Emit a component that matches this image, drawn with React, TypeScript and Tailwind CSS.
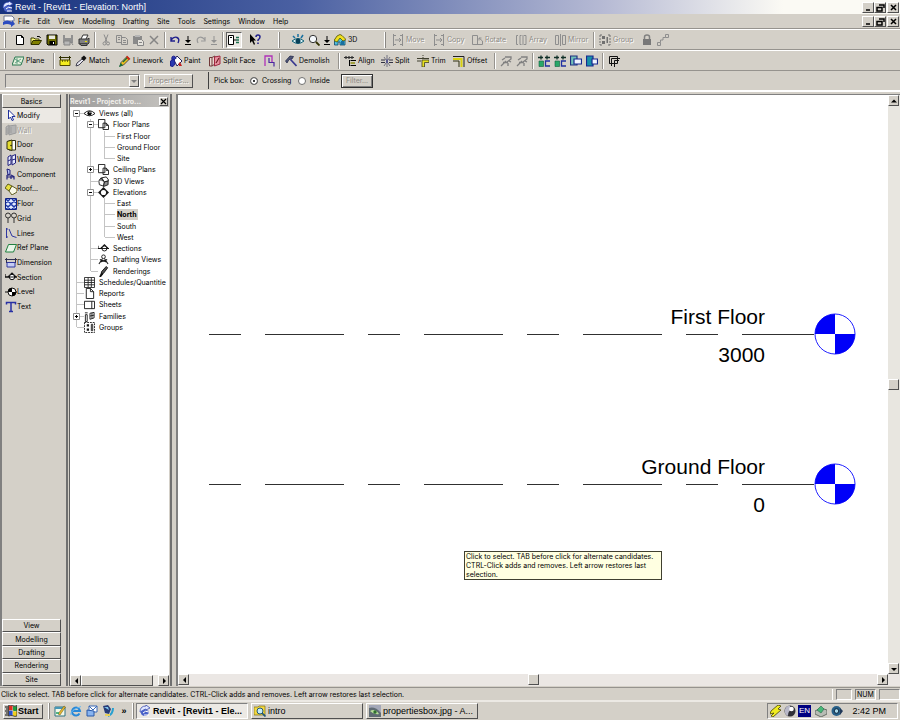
import { ReactNode } from "react";

const raised = "border border-t-white border-l-white border-r-[#505050] border-b-[#505050] bg-[#d4d0c8]";
const sunken = "border border-t-[#808080] border-l-[#808080] border-r-white border-b-white";

// 12x12 glyphs shared by the toolbars, the design bar and the browser
const glyphs: Record<string, ReactNode> = {
  revit: (
    <>
      <path d="M1 7 Q1 1 7 1 L7 0 L11 3 L7 5 L7 4 Q4 4 4 7Z" fill="#dfe6ff" stroke="#2438a8" strokeWidth=".7" />
      <path d="M2 6 Q5 3 10 6 Q10 11 5 11 Q1 10 2 6Z" fill="#4a62c8" />
      <path d="M4 8 Q6 5 10 7 M5 10 H10" stroke="#fff" fill="none" />
    </>
  ),
  doc: (
    <>
      <path d="M1 1H9L11 3V6H1Z" fill="#fff" stroke="#707890" />
      <path d="M0 7 Q4 4 9 7 V5 L12 9 L8 12 V10 Q4 8 0 10Z" fill="#2c4cc0" />
    </>
  ),
  new: <path d="M2.500 1.500H7.500L9.500 3.500V10.500H2.500ZM7.500 1.500V3.500H9.500" fill="#fff" stroke="#000" />,
  open: (
    <>
      <path d="M1 10V4H4L5 5H9V7" fill="#ffff80" stroke="#404000" />
      <path d="M1 10.500 3 6.500H11.500L9 10.500Z" fill="#808000" stroke="#303000" />
      <path d="M7 2.500H9.500L10.500 4" stroke="#000" fill="none" />
    </>
  ),
  save: (
    <>
      <path d="M1 1H11V11H2L1 10Z" fill="#6b6b00" stroke="#000" />
      <path d="M3 1.500H9V5H3Z" fill="#e8e8e0" />
      <path d="M3.500 7H9V11H3.500Z" fill="#000" />
      <path d="M7 8H8V10H7Z" fill="#fff" />
    </>
  ),
  saveAll: (
    <>
      <path d="M1 1H11V9H1Z" fill="#909090" />
      <path d="M3 1H9V4H3Z" fill="#d4d0c8" />
      <path d="M2 7H8V11H2ZM9 8 11 11" fill="#b8b8b8" stroke="#858585" />
    </>
  ),
  print: (
    <>
      <path d="M3 5 5 1H10L8 5" fill="#fff" stroke="#333" />
      <path d="M1 5H10L11 4V9L10 10H1Z" fill="#808080" stroke="#333" />
      <path d="M2 10H9V11.500H3Z" fill="#ccc" stroke="#333" />
      <path d="M7 7.500H9" stroke="#e8e000" />
    </>
  ),
  cut: <path d="M4 0.500 7 8M8 0.500 5 8M4.500 8A1.500 1.500 0 1 0 4.500 11 1.500 1.500 0 1 0 4.500 8M8 8A1.500 1.500 0 1 0 8 11 1.500 1.500 0 1 0 8 8" fill="none" stroke="#8a8a8a" />,
  copy: <path d="M.5 1.500H5.500V8.500H.5ZM5.500 3.500H9.500L11.500 5.500V10.500H5.500ZM2 3.500H4M2 5.500H4M7 6.500H10M7 8.500H10" fill="#d4d0c8" stroke="#8a8a8a" />,
  paste: (
    <>
      <path d="M1 2H10V10H1Z" fill="#8a8a8a" />
      <path d="M3 1H8V3H3Z" fill="#b5b5b5" />
      <path d="M5.500 5.500H9.500L11.500 7.500V11.500H5.500ZM7 8.500H10" fill="#e4e2dc" stroke="#858585" />
    </>
  ),
  del: <path d="M2 2 10 10M10 2 2 10" stroke="#858585" strokeWidth="1.500" />,
  undo: <path d="M2 3V7H6M2 6Q5 2 8 3.500 11 5 9 9" fill="none" stroke="#20208c" strokeWidth="1.400" />,
  redo: <path d="M10 3V7H6M10 6Q7 2 4 3.500 1 5 3 9" fill="none" stroke="#999" strokeWidth="1.200" />,
  down: <path d="M5.500 2H6.500V6H9L6 9 3 6H5.500ZM3 10H9V11H3Z" fill="#000" />,
  downOff: <path d="M5.500 2H6.500V6H9L6 9 3 6H5.500ZM3 10H9V11H3Z" fill="#929292" />,
  browser: (
    <>
      <path d="M.5 1.500H5.500V10.500H.5Z" fill="#fff" stroke="#000" />
      <path d="M5.500 6H8M2 3.500H4" stroke="#000" />
      <path d="M8 3.500H11M8 6H11M8 8.500H11" stroke="#207050" strokeWidth="1.500" />
    </>
  ),
  help: (
    <>
      <path d="M1 0V9L3 7 5 11 6 10 4.500 6.500H7Z" fill="#000" />
      <path d="M7 3Q7 1 9 1T11 3Q11 4.500 9 6V7M9 8.500V10" fill="none" stroke="#20208c" strokeWidth="1.500" />
    </>
  ),
  viewEye: (
    <>
      <path d="M0 7Q6 2 12 7 6 12 0 7Z" fill="#d8f4f8" stroke="#106078" />
      <circle cx="6" cy="7" r="2.500" fill="#084058" />
      <path d="M1 2 3 4M6 0V3M11 1 9 4" stroke="#1870a0" strokeWidth="1.500" />
    </>
  ),
  zoom: (
    <>
      <circle cx="5" cy="5" r="3.700" fill="#f4f8fc" stroke="#303030" />
      <path d="M8 8 11.500 11.500" stroke="#303000" strokeWidth="1.800" />
    </>
  ),
  house: (
    <>
      <path d="M0.500 6V11H4V8H6V11H11V6L6 1Z" fill="#50c0e0" stroke="#104868" strokeWidth=".8" />
      <path d="M0 6.500 3 2 6 0.500 8 1.500 12 5.500 9 7 6 4 3 8Z" fill="#f0e020" stroke="#505000" strokeWidth=".8" />
      <path d="M7 7H10V11H7Z" fill="#1870a0" />
    </>
  ),
  move: <path d="M1.500 0V12M1.500 1.500H4M1.500 10.500H4M10.500 0V12M10.500 1.500H8M10.500 10.500H8M3 6H9M7 4 9 6 7 8" fill="none" stroke="#8e8e8e" />,
  rotate: <path d="M1.500 1.500H6.500V10.500H1.500ZM4 10.500H11.500V7L8 4M8 4V6.500M8 4H10.500" fill="none" stroke="#8e8e8e" />,
  array: <path d="M3 1.500H1.500V10.500H3M6.500 1.500H5V10.500H6.500M9 1.500H11V10.500H9M8 1V11" fill="none" stroke="#8e8e8e" />,
  mirror: <path d="M1.500 1.500H4.500V10.500H1.500ZM8.500 1.500H11.500V10.500H8.500ZM6.500 0V12" fill="none" stroke="#8e8e8e" />,
  groupOff: (
    <>
      <path d="M1 1H3M9 1H11M1 11H3M9 11H11M1 1V11M11 1V11" stroke="#707070" strokeDasharray="2 1" />
      <path d="M3 2H6V5H3ZM3 7H6V10H3ZM7.500 3H9V9H7.500Z" fill="#707070" />
    </>
  ),
  lock: (
    <>
      <path d="M3.500 5V3Q3.500 1 6 1T8.500 3V5" fill="none" stroke="#808080" strokeWidth="1.500" />
      <path d="M2 5H10V11H2Z" fill="#787878" />
    </>
  ),
  link: <path d="M.5 8.500H3.500V11.500H.5ZM8.500 .5H11.500V3.500H8.500ZM3.500 8.500V6H6V3.500H8.500" fill="none" stroke="#8e8e8e" />,
  plane: (
    <>
      <path d="M3 2H12L9 10H0Z" fill="#e4f0dc" stroke="#287850" />
      <path d="M3 4 9 8M9 4 3 8M5 3V9" stroke="#489070" strokeWidth=".8" />
    </>
  ),
  measure: (
    <>
      <path d="M0 2.500H12M1.500 1V5M10.500 1V5" stroke="#303000" />
      <path d="M1 5H11V10.500H1Z" fill="#f4ec20" stroke="#504800" />
      <path d="M3.500 5V7M6 5V7M8.500 5V7" stroke="#404000" strokeWidth=".7" />
    </>
  ),
  match: (
    <>
      <path d="M1 11 2 8 7 4 8.500 5.500 4 10Z" fill="#e8e8f0" stroke="#404050" />
      <path d="M6 3 9 0.500 11.500 3 9 6Z" fill="#101010" />
    </>
  ),
  linework: (
    <>
      <path d="M1 11 2 7.500 8 1.500 10.500 4 4.500 10Z" fill="#f0c020" stroke="#303030" strokeWidth=".8" />
      <path d="M8 0.500 11.500 4 9.500 5 7 2.500Z" fill="#d02818" />
      <path d="M4 7 8 3M1 11 2 9 3 10Z" stroke="#18703c" strokeWidth="1.200" />
    </>
  ),
  paint: (
    <>
      <path d="M4 5 7 1 12 6 7 11Z" fill="#fff" stroke="#202060" />
      <path d="M2 5Q1 0 5 1.500L6 4M0.500 6 4 4 5 9 3 11.500 0.500 11Z" fill="#2838b0" stroke="#20208c" />
      <path d="M8.500 8.500 10 7 12 11H9Z" fill="#c02020" />
    </>
  ),
  splitFace: (
    <>
      <path d="M.5 2.500H3V11H.5ZM3 11 6 9V1L3 2.500" fill="#e8d8d0" stroke="#703838" />
      <path d="M5.500 2 11 1V9L5.500 11Z" fill="#e890a0" stroke="#a02840" />
      <path d="M7 8 10 3" stroke="#702020" strokeWidth="1.200" />
    </>
  ),
  portal: (
    <>
      <path d="M2 11V1H9V8" fill="none" stroke="#b030b8" strokeWidth="1.300" />
      <path d="M6 3V7.500H11V11.500" fill="none" stroke="#4828a0" strokeWidth="1.200" />
    </>
  ),
  hammer: (
    <>
      <path d="M0.500 6 5 1 8.500 1.500 7 4 4 4.500 2 8Z" fill="#505878" stroke="#181c40" strokeWidth=".7" />
      <path d="M5.500 4.500 11.500 11" stroke="#383890" strokeWidth="1.700" />
    </>
  ),
  align: (
    <>
      <path d="M0 2.500H10M2 1V4M5 1V4M8 1V4" stroke="#303030" strokeWidth="1.200" />
      <path d="M6.500 5.500H12M6.500 10.500H12M5.500 5V11" stroke="#000" />
      <path d="M6.500 8H11" stroke="#909010" strokeWidth="1.500" />
    </>
  ),
  split: (
    <>
      <path d="M0 5H4M8 5H12M0 7.500H4M8 7.500H12" stroke="#303040" />
      <path d="M3 2 5 5M9 2 7 5M3 11 5 8M9 11 7 8M6 0V12" fill="none" stroke="#686878" strokeWidth=".9" />
      <path d="M5 4.500H7V8H5Z" fill="#585890" />
    </>
  ),
  trim: (
    <>
      <path d="M0 3.500H12M0 6H4" stroke="#404030" />
      <path d="M5 12V5H12V7.500H7.500V12Z" fill="#e8e020" stroke="#404020" strokeWidth=".8" />
      <path d="M6 0V4" stroke="#404030" strokeDasharray="1 1" />
    </>
  ),
  offset: (
    <>
      <path d="M0 1.500H11V12" fill="none" stroke="#202020" />
      <path d="M0 4H8.500V12" fill="none" stroke="#d8d010" strokeWidth="2" />
      <path d="M0 6H6V12" fill="none" stroke="#303010" />
    </>
  ),
  wrench: <path d="M1 11 6 6M5 2H11V4L7 7M2 5 5 3M3 7.500H8M8 8V11M9 6 11 7" fill="none" stroke="#808080" strokeWidth="1.300" />,
  joinA: (
    <>
      <path d="M0 2.500H5M7 2.500H12M3 .5V4.500M9 .5V4.500" stroke="#103028" strokeWidth="1.300" />
      <path d="M1 6H5.500V11.500H1Z" fill="#28a868" stroke="#106040" strokeWidth=".6" />
      <path d="M12 6H7.500V11H12" fill="none" stroke="#2030a0" strokeWidth="1.300" />
    </>
  ),
  joinB: (
    <>
      <path d="M.5 1H7V10H.5Z" fill="#70c0b8" stroke="#203080" strokeWidth="1.200" />
      <path d="M4 4H11.500V9H4Z" fill="#f0f4ff" stroke="#182890" strokeWidth="1.200" />
    </>
  ),
  joinC: (
    <>
      <path d="M.5 1H7V11H.5Z" fill="#1890a8" stroke="#182890" strokeWidth="1.200" />
      <path d="M6 4H11.500V9H6Z" fill="#f0f4ff" stroke="#182890" strokeWidth="1.200" />
    </>
  ),
  frames: <path d="M3.500 8.500H1.500V1.500H9.500V3M3.500 11V3.500H12M6.500 12V5.500H11M1.500 8.500H9.500V3.500" fill="none" stroke="#101010" />,
  modify: <path d="M3.500 1V10L5.500 8 7 11.500 8.500 11 7 7.500H10Z" fill="#fff" stroke="#20309c" />,
  wall: <path d="M1 3 4 1V9L1 11ZM4 2 11 1V9L4 11ZM2 4V9M6 3V9" fill="#b4b4b4" stroke="#9c9c9c" />,
  door: (
    <>
      <path d="M4 1.500H10.500V11H4Z" fill="#fff" stroke="#303010" />
      <path d="M2 2.500 7 1V11.500L2 10Z" fill="#e4dc30" stroke="#303010" />
      <circle cx="6" cy="6.500" r=".7" />
    </>
  ),
  window: <path d="M3 3 6 1V10L3 11.500ZM7 2 10.500 .5V9L7 11ZM3 7 6 5.500M7 6 10.500 5" fill="#e8ecff" stroke="#20207c" />,
  component: (
    <>
      <path d="M2 1 5 2V6L3 7Z" fill="#b8c4f4" stroke="#20207c" />
      <path d="M2 7H6L9 8.500V11.500M2 7V11.500M6 8V11M2 9H9" fill="none" stroke="#20207c" strokeWidth="1.200" />
    </>
  ),
  roof: (
    <>
      <path d="M0 5 3 1 7 3 4 8Z" fill="#e8e040" stroke="#505010" strokeWidth=".9" />
      <path d="M4 8 7 3 12 6V9L7 12Z" fill="#f8f8e8" stroke="#505010" strokeWidth=".9" />
    </>
  ),
  floor: (
    <>
      <path d="M.5 .5H11.500V11.500H.5Z" fill="#e4ecff" stroke="#102080" />
      <path d="M1 5 5 1M1 11 11 1M7 11 11 7M1 7 5 11M1 1 11 11M7 1 11 5" stroke="#1c38a8" strokeWidth="1.500" />
    </>
  ),
  grid: <path d="M3 1A2 2 0 1 0 3 6 2 2 0 1 0 3 1M3 6V11M9 1A2 2 0 1 0 9 6 2 2 0 1 0 9 1M9 6V11" fill="none" stroke="#303030" />,
  lines: <path d="M1.500 1V11M4 2 7 9 11.500 10.500M1 2H3M1 10H3" fill="none" stroke="#3038a0" />,
  refPlane: <path d="M3.500 2.500H11.500L8.500 10H.5Z" fill="#e8f4e8" stroke="#208040" />,
  dimension: (
    <>
      <path d="M0 2.500H12M1.500 1V6M10.500 1V6" stroke="#303050" />
      <path d="M2 5.500H10V10H2Z" fill="#c4ccf4" stroke="#3038a0" />
    </>
  ),
  section: (
    <>
      <path d="M0 3V6H12M3 6 7 2 11 6" fill="none" stroke="#101010" strokeWidth="1.200" />
      <circle cx="7" cy="6" r="2.700" fill="#fff" stroke="#101010" />
      <path d="M0 6H12" stroke="#101010" />
    </>
  ),
  level: (
    <>
      <path d="M0 6H12" stroke="#101010" />
      <circle cx="7" cy="6" r="4" fill="#fff" stroke="#101010" />
      <path d="M7 6V2A4 4 0 0 0 3 6ZM7 6V10A4 4 0 0 0 11 6Z" />
    </>
  ),
  text: <path d="M1.500 3.500V1.500H10.500V3.500M6 1.500V10.500M4 10.500H8" fill="none" stroke="#2830a4" strokeWidth="1.500" />,
  eye: (
    <>
      <path d="M0 6Q6 0 12 6 6 11 0 6Z" fill="#fff" stroke="#101010" />
      <circle cx="6" cy="5.800" r="2.300" />
      <circle cx="6.500" cy="5" r=".7" fill="#fff" />
    </>
  ),
  plan: <path d="M.5 .5H7.500V9.500H.5ZM5.500 4.500H9L11.500 7V11.500H5.500ZM9 4.500V7H11.500" fill="#fff" stroke="#181818" />,
  view3d: (
    <>
      <path d="M1 6 4 2 9 1 12 5 7 6.500 6 11 1.500 9.500Z" fill="#fff" stroke="#181818" />
      <path d="M7 6.500 11 5.500V9.500L6 11.500ZM4 2 7 6.500M1 5 3.500 2 6 6" fill="#909090" stroke="#181818" />
    </>
  ),
  elevation: (
    <>
      <path d="M6 0 12 6 6 12 0 6Z" fill="#181818" />
      <circle cx="6" cy="6" r="2.800" fill="#fff" />
    </>
  ),
  drafting: (
    <>
      <circle cx="6" cy="3" r="2" fill="#fff" stroke="#181818" />
      <path d="M5 5 1 11M7 5 11 11M2 6 10 9M10 6 2 9" stroke="#181818" strokeWidth="1.100" />
    </>
  ),
  rendering: (
    <>
      <path d="M3 10 4 6 9 .5 10.500 2 6 8Z" fill="#505050" stroke="#101010" />
      <path d="M2 12 5 8" stroke="#101010" strokeWidth="2" />
    </>
  ),
  schedule: <path d="M.5 .5H11.500V11.500H.5ZM.5 3.500H11.500M.5 6H11.500M.5 8.500H11.500M4.500 .5V11.500M8 .5V11.500" fill="#fff" stroke="#282828" />,
  report: <path d="M2.500 .5H7L10.500 4V11.500H2.500ZM7 .5V4H10.500" fill="#fff" stroke="#181818" />,
  sheet: <path d="M.5 2.500H11.500V10.500H.5ZM8.500 2.500V10.500" fill="#fff" stroke="#181818" />,
  families: (
    <>
      <path d="M1.500 4V11.500H3.500V4ZM1 2H4" fill="#fff" stroke="#181818" />
      <path d="M6.500 2.500 11 1.500V7.500L6.500 9ZM6.500 5.500 11 4.500M8.700 2V8" fill="#fff" stroke="#181818" />
    </>
  ),
  groups: (
    <>
      <path d="M.5 .5H11.500V11.500H.5Z" fill="none" stroke="#181818" strokeDasharray="2 1" />
      <path d="M3 2.500H5.500V5H3ZM3 7H5.500V9.500H3Z" fill="#181818" />
      <path d="M8 2.500H9.500V9.500H8Z" fill="#fff" stroke="#181818" />
    </>
  ),
  windows: (
    <>
      <path d="M4 1Q6 0 7.500 1V5.500Q6 4.500 4 5.500Z" fill="#e03020" />
      <path d="M8 1Q10 2 12 1V5.500Q10 6.500 8 5.500Z" fill="#20a040" />
      <path d="M4 6Q6 5 7.500 6V10.500Q6 9.500 4 10.500Z" fill="#2850d0" />
      <path d="M8 6Q10 7 12 6V10.500Q10 11.500 8 10.500Z" fill="#f0d020" />
      <path d="M0 2H3M1 4H3M0 6H3M1 8H3M0 10H3" stroke="#101010" strokeWidth="1.200" />
      <path d="M3.500 .5Q6-.5 7.800 .7 10 2 12 .5V11Q10 12 7.800 10.700 6 10 3.500 11Z" fill="none" stroke="#101010" strokeWidth=".7" />
    </>
  ),
  desktop: (
    <>
      <path d="M1 2H11V11H1Z" fill="#f4f8e8" stroke="#307080" />
      <path d="M1 2H11V4H1Z" fill="#4898b8" />
      <path d="M4 9 10 1 11.500 2 6 10Z" fill="#e8b830" stroke="#605010" strokeWidth=".5" />
      <path d="M2 8H5" stroke="#20a060" strokeWidth="1.500" />
    </>
  ),
  ie: (
    <>
      <path d="M9.500 8.500A4 4 0 1 1 10 6H3" fill="none" stroke="#2888d8" strokeWidth="2" />
      <path d="M1 10Q-1 6 11 1.500" fill="none" stroke="#68b8f0" />
    </>
  ),
  outlook: (
    <>
      <path d="M3 1H11V7H3Z" fill="#fff" stroke="#3868b8" />
      <path d="M3 1 7 5 11 1" fill="none" stroke="#3868b8" />
      <path d="M1 5 8 6V11H1Z" fill="#88b4f0" stroke="#2858a8" />
    </>
  ),
  player: (
    <>
      <path d="M1 1 6 0 9 4 7 9 3 8Z" fill="#283c78" />
      <path d="M2 2 6 2 7 5Z" fill="#80c8f0" />
      <path d="M6 11Q11 9 11 3" fill="none" stroke="#28a0d0" strokeWidth="2" />
      <path d="M3 9H8V11H3Z" fill="#e8d058" />
    </>
  ),
  search: (
    <>
      <path d="M0 2H4L5 1H11V10H0Z" fill="#f4d840" stroke="#807010" strokeWidth=".7" />
      <circle cx="6" cy="6" r="3" fill="#c8ecf8" stroke="#205878" />
      <path d="M8 8 11.500 11.500" stroke="#205878" strokeWidth="1.700" />
    </>
  ),
  picture: (
    <>
      <path d="M0 0H12V12H0Z" fill="#a4a8b8" />
      <path d="M0 3Q6 1 12 8V12H0Z" fill="#606c74" />
      <path d="M1 6Q6 3 10 9 5 10 1 6Z" fill="#b8e098" />
      <circle cx="6" cy="7" r="1.700" fill="#307030" />
    </>
  ),
  plug: <path d="M1 6 8 0 11 1 8 4 11 5 3 12 1 11 4 8 0 9Z" fill="#f0ec20" stroke="#484400" strokeWidth=".8" />,
  ball: (
    <>
      <circle cx="6" cy="6" r="5.500" fill="#303038" />
      <path d="M6 .5A5.500 5.500 0 0 0 4 11Q4 6 7 5Z" fill="#b8b8c8" />
      <circle cx="7.500" cy="4" r="2.300" fill="#fff" />
    </>
  ),
  disk: (
    <>
      <path d="M0 6 6 3 12 5V9L6 12 0 9Z" fill="#b8bcb4" stroke="#505850" strokeWidth=".8" />
      <path d="M2 5 6 1 9 4 6 8Z" fill="#48b878" stroke="#286848" strokeWidth=".6" />
    </>
  ),
  sound: (
    <>
      <circle cx="5.500" cy="6" r="5" fill="#286088" />
      <circle cx="5.500" cy="6" r="2.300" fill="#a8d8e8" stroke="#102840" />
      <path d="M9 3 12 6 9 10Z" fill="#203858" />
    </>
  ),
};

function Glyph({ name, className = "size-3" }: { name: string; className?: string }) {
  return (
    <svg viewBox="0 0 12 12" className={`shrink-0 ${className}`} aria-hidden="true">
      {glyphs[name]}
    </svg>
  );
}

type Tool = { icon: string; label?: string; w: string; off?: boolean; on?: boolean };

const fileTools: (Tool | null)[] = [
  { icon: "new", w: "w-4" },
  { icon: "open", w: "w-4" },
  { icon: "save", w: "w-4" },
  { icon: "saveAll", w: "w-4", off: true },
  { icon: "print", w: "w-4" },
  null,
  { icon: "cut", w: "w-4", off: true },
  { icon: "copy", w: "w-4", off: true },
  { icon: "paste", w: "w-4", off: true },
  { icon: "del", w: "w-4", off: true },
  null,
  { icon: "undo", w: "w-[13px]" },
  { icon: "down", w: "w-[13px]" },
  { icon: "redo", w: "w-[13px]", off: true },
  { icon: "downOff", w: "w-[13px]", off: true },
  null,
  { icon: "browser", w: "w-4", on: true },
  { icon: "help", w: "w-[26px]" },
];

const viewTools: (Tool | null)[] = [
  { icon: "viewEye", w: "w-4" },
  { icon: "zoom", w: "w-[15px]" },
  { icon: "down", w: "w-[11px]" },
  { icon: "house", label: "3D", w: "w-[48px]" },
];

const editTools: (Tool | null)[] = [
  { icon: "move", label: "Move", w: "w-[41px]", off: true },
  { icon: "move", label: "Copy", w: "w-[38px]", off: true },
  { icon: "rotate", label: "Rotate", w: "w-[44px]", off: true },
  { icon: "array", label: "Array", w: "w-[39px]", off: true },
  { icon: "mirror", label: "Mirror", w: "w-[39px]", off: true },
  null,
  { icon: "groupOff", label: "Group", w: "w-[42px]", off: true },
  { icon: "lock", w: "w-4", off: true },
  { icon: "link", w: "w-4", off: true },
];

const modelTools: (Tool | null)[] = [
  { icon: "plane", label: "Plane", w: "w-[41px]" },
  null,
  { icon: "measure", w: "w-4" },
  { icon: "match", label: "Match", w: "w-[44px]" },
  { icon: "linework", label: "Linework", w: "w-[51px]" },
  { icon: "paint", label: "Paint", w: "w-[39px]" },
  { icon: "splitFace", label: "Split Face", w: "w-[54px]" },
  { icon: "portal", w: "w-4" },
  null,
  { icon: "hammer", label: "Demolish", w: "w-[53px]" },
  null,
  { icon: "align", label: "Align", w: "w-[37px]" },
  { icon: "split", label: "Split", w: "w-[36px]" },
  { icon: "trim", label: "Trim", w: "w-[36px]" },
  { icon: "offset", label: "Offset", w: "w-[41px]" },
  null,
  { icon: "wrench", w: "w-4", off: true },
  { icon: "wrench", w: "w-4", off: true },
  null,
  { icon: "joinA", w: "w-4" },
  { icon: "joinA", w: "w-4" },
  { icon: "joinB", w: "w-4" },
  { icon: "joinC", w: "w-4" },
  null,
  { icon: "frames", w: "w-4" },
];

function Grip({ className = "mx-1" }: { className?: string }) {
  return <span className={`h-4 w-[2px] shrink-0 border-l border-r border-l-white border-r-[#8a8782] ${className}`} />;
}

function ToolStrip({ tools }: { tools: (Tool | null)[] }) {
  return (
    <div className="flex items-center">
      {tools.map((tool, i) =>
        tool ? (
          <button
            key={i}
            disabled={tool.off}
            aria-label={tool.label ?? tool.icon}
            className={`flex h-4 shrink-0 items-center gap-[2px] whitespace-nowrap ${tool.w} ${
              tool.label ? "pl-[2px]" : "justify-center"
            } ${tool.off ? "text-[#8e8b86] [text-shadow:1px_1px_0_#fff]" : ""} ${
              tool.on ? "border border-t-[#606060] border-l-[#606060] border-r-white border-b-white bg-[#ece9e4]" : ""
            }`}
          >
            <Glyph name={tool.icon} />
            {tool.label}
          </button>
        ) : (
          <span key={i} className="mx-[2px] h-4 w-[2px] shrink-0 border-l border-r border-l-[#96938e] border-r-white" />
        )
      )}
    </div>
  );
}

function WindowButtons() {
  const shapes = [
    { label: "Minimize", d: "M2 7H6" },
    { label: "Restore", d: "M3 2H8V5M1 4.500H6V8H1Z" },
    { label: "Close", d: "M2 2 7 7M7 2 2 7" },
  ];
  return (
    <div className="flex">
      {shapes.map((s) => (
        <button key={s.label} aria-label={s.label} className={`flex h-[11px] w-3 items-center justify-center last:ml-px ${raised}`}>
          <svg viewBox="0 0 9 9" className="size-[9px] shrink-0">
            <path d={s.d} fill="none" stroke="#000" strokeWidth="1.500" />
          </svg>
        </button>
      ))}
    </div>
  );
}

const menus = ["File", "Edit", "View", "Modelling", "Drafting", "Site", "Tools", "Settings", "Window", "Help"];

const palette = [
  { icon: "modify", label: "Modify" },
  { icon: "wall", label: "Wall" },
  { icon: "door", label: "Door" },
  { icon: "window", label: "Window" },
  { icon: "component", label: "Component" },
  { icon: "roof", label: "Roof..." },
  { icon: "floor", label: "Floor" },
  { icon: "grid", label: "Grid" },
  { icon: "lines", label: "Lines" },
  { icon: "refPlane", label: "Ref Plane" },
  { icon: "dimension", label: "Dimension" },
  { icon: "section", label: "Section" },
  { icon: "level", label: "Level" },
  { icon: "text", label: "Text" },
];

function DesignBar() {
  return (
    <aside className="flex w-[62px] shrink-0 flex-col border-l-2 border-[#808080] pr-px">
      <button className={`h-[14px] shrink-0 ${raised}`}>Basics</button>
      <div className="flex h-[206px] shrink-0 flex-col">
        {palette.map((item, i) => (
          <button
            key={item.label}
            disabled={item.label === "Wall"}
            className={`flex min-h-0 flex-1 items-center pl-[3px] disabled:text-[#a09d98] disabled:[text-shadow:1px_1px_0_#fff] ${
              i === 0 ? "bg-[#ece9e4]" : ""
            }`}
          >
            <Glyph name={item.icon} />
            {item.label}
          </button>
        ))}
      </div>
      <div className="mt-auto flex h-[67px] flex-col">
        {["View", "Modelling", "Drafting", "Rendering", "Site"].map((tab) => (
          <button key={tab} className={`flex min-h-0 flex-1 items-center justify-center ${raised}`}>
            {tab}
          </button>
        ))}
      </div>
    </aside>
  );
}

// guides: one letter per indent column, "|" line goes on, "t" branch, "l" last branch, "f" first
type Node = { label: string; guides: string; icon?: string; box?: "+" | "-"; active?: boolean };

const nodes: Node[] = [
  { label: "Views (all)", guides: "f", icon: "eye", box: "-" },
  { label: "Floor Plans", guides: "|t", icon: "plan", box: "-" },
  { label: "First Floor", guides: "||t" },
  { label: "Ground Floor", guides: "||t" },
  { label: "Site", guides: "||l" },
  { label: "Ceiling Plans", guides: "|t", icon: "plan", box: "+" },
  { label: "3D Views", guides: "|t", icon: "view3d" },
  { label: "Elevations", guides: "|t", icon: "elevation", box: "-" },
  { label: "East", guides: "||t" },
  { label: "North", guides: "||t", active: true },
  { label: "South", guides: "||t" },
  { label: "West", guides: "||l" },
  { label: "Sections", guides: "|t", icon: "section" },
  { label: "Drafting Views", guides: "|t", icon: "drafting" },
  { label: "Renderings", guides: "|l", icon: "rendering" },
  { label: "Schedules/Quantitie", guides: "t", icon: "schedule" },
  { label: "Reports", guides: "t", icon: "report" },
  { label: "Sheets", guides: "t", icon: "sheet" },
  { label: "Families", guides: "t", icon: "families", box: "+" },
  { label: "Groups", guides: "l", icon: "groups" },
];

function Guide({ kind, box }: { kind: string; box?: "+" | "-" }) {
  const stem = kind === "l" ? "h-1/2" : kind === "f" ? "h-1/2 self-end" : "h-full";
  return (
    <span className="relative flex h-full w-[14px] shrink-0">
      <span className={`w-[7px] border-r border-[#c4c4c4] ${stem}`} />
      {kind !== "|" && <span className="w-[7px] self-center border-t border-[#c4c4c4]" />}
      {box && (
        <svg viewBox="0 0 7 7" className="absolute top-[2px] left-[3px] size-[7px]">
          <path d="M.5 .5H6.500V6.500H.5Z" fill="#fff" stroke="#909090" />
          <path d={box === "+" ? "M2 3.500H5M3.500 2V5" : "M2 3.500H5"} stroke="#000" />
        </svg>
      )}
    </span>
  );
}

function ArrowButton({ dir, className = "" }: { dir: "left" | "right" | "up" | "down"; className?: string }) {
  const d = { left: "M6 1V7L3 4Z", right: "M3 1V7L6 4Z", up: "M1 5.500H7L4 2.500Z", down: "M1 3H7L4 6Z" }[dir];
  return (
    <button aria-label={`Scroll ${dir}`} className={`flex size-[11px] shrink-0 items-center justify-center ${raised} ${className}`}>
      <svg viewBox="0 0 8 8" className="size-2">
        <path d={d} />
      </svg>
    </button>
  );
}

function ProjectBrowser() {
  return (
    <aside className="flex w-[106px] shrink-0 flex-col border-x-2 border-[#707070] px-px">
      <div className="flex min-h-0 flex-1 flex-col border-t border-l border-t-[#a0a0a0] border-l-[#606060] bg-white">
        <div className="mb-px flex h-3 shrink-0 items-center justify-between bg-linear-to-r from-[#9c9c9c] to-[#c4c2be] pr-px font-bold text-[#f0eeea]">
          <span className="whitespace-nowrap">Revit1 - Project bro...</span>
          <button aria-label="Close browser" className={`flex size-[9px] items-center justify-center ${raised}`}>
            <svg viewBox="0 0 7 7" className="size-[7px] shrink-0">
              <path d="M1 1 6 6M6 1 1 6" stroke="#000" strokeWidth="1.200" />
            </svg>
          </button>
        </div>
        <ul className="flex h-[225px] flex-col">
          {nodes.map((node) => (
            <li key={node.label} className="flex min-h-0 flex-1 items-center whitespace-nowrap">
              {node.guides.split("").map((kind, i) => (
                <Guide key={i} kind={kind} box={i === node.guides.length - 1 ? node.box : undefined} />
              ))}
              {node.icon ? (
                <Glyph name={node.icon} className="mr-1 size-[11px]" />
              ) : (
                <span className="mr-[2px] w-[3px] border-t border-[#c4c4c4]" />
              )}
              <a href="#view" className={node.active ? "bg-[#d4d0c8] pr-px font-bold" : ""}>
                {node.label}
              </a>
            </li>
          ))}
        </ul>
        <div className="mt-auto flex h-[11px] bg-[#ece9e4]">
          <ArrowButton dir="left" />
          <span className={`h-full w-[72px] ${raised}`} />
          <ArrowButton dir="right" className="ml-auto" />
        </div>
      </div>
    </aside>
  );
}

function LevelMark({ name, height, className }: { name: string; height: string; className: string }) {
  return (
    <div className={`absolute right-8 left-[31px] flex items-center font-['Liberation_Sans',Arial,sans-serif] ${className}`}>
      <svg className="h-px min-w-0 flex-1">
        <line x1="0" y1=".5" x2="100%" y2=".5" stroke="#303030" strokeDasharray="32 24 79 24" />
      </svg>
      <svg viewBox="0 0 42 42" className="size-[42px] shrink-0">
        <circle cx="21" cy="21" r="20" fill="#fff" stroke="#2020ff" />
        <path d="M21 21V1A20 20 0 0 0 1 21ZM21 21V41A20 20 0 0 0 41 21Z" fill="#0000f8" />
      </svg>
      <div className="absolute -top-2 right-[91px] flex flex-col items-end gap-[14px] text-[21px] leading-6">
        <span>{name}</span>
        <span>{height}</span>
      </div>
    </div>
  );
}

function Canvas() {
  return (
    <main className="flex min-w-0 flex-1 flex-col border-t border-l-2 border-[#808080] bg-white">
      <div className="flex min-h-0 flex-1">
        <div className="relative min-w-0 flex-1">
          <LevelMark name="First Floor" height="3000" className="top-[218px]" />
          <LevelMark name="Ground Floor" height="0" className="top-[368px]" />
          <div className="absolute top-[456px] left-[286px] w-[198px] border border-[#404030] bg-[#ffffe1] px-px leading-[9px]">
            Click to select. TAB before click for alternate candidates. CTRL-Click adds and removes. Left arrow restores last
            selection.
          </div>
        </div>
        <div className="flex w-3 flex-col justify-between bg-[#e8e6e0] pr-px">
          <ArrowButton dir="up" />
          <span className={`size-[11px] ${raised}`} />
          <ArrowButton dir="down" />
        </div>
      </div>
      <div className="flex h-3 justify-between bg-[#ebe7e4] pr-3 pb-px">
        <ArrowButton dir="left" />
        <span className={`size-[11px] ${raised}`} />
        <ArrowButton dir="right" />
      </div>
    </main>
  );
}

function OptionsBar() {
  return (
    <div className="flex h-[21px] items-center border-b-2 border-white pl-[5px]">
      <div className={`flex h-[14px] w-[135px] ${sunken}`}>
        <select disabled aria-label="Type selector" className="min-w-0 flex-1 appearance-none" />
        <span className={`flex w-[10px] items-center justify-center ${raised}`}>
          <svg viewBox="0 0 6 6" className="size-[6px]">
            <path d="M0 2H6L3 5Z" fill="#808080" />
          </svg>
        </span>
      </div>
      <button disabled className={`ml-1 h-[14px] w-[49px] text-[#8e8b86] [text-shadow:1px_1px_0_#fff] ${raised}`}>
        Properties...
      </button>
      <span className="ml-[15px] h-[17px] w-px bg-[#404040]" />
      <span className="ml-[5px] w-9">Pick box:</span>
      <label className="flex w-12 items-center gap-1">
        <input type="radio" name="pick" defaultChecked className="size-2 appearance-none rounded-full border border-[#707070] bg-white checked:bg-black checked:shadow-[inset_0_0_0_2px_white]" />
        Crossing
      </label>
      <label className="flex w-[43px] items-center gap-1">
        <input type="radio" name="pick" className="size-2 appearance-none rounded-full border border-[#707070] bg-white checked:bg-black checked:shadow-[inset_0_0_0_2px_white]" />
        Inside
      </label>
      <button disabled className="h-[14px] w-8 border border-[#303030] text-[#8e8b86] shadow-[inset_1px_1px_0_white,inset_-1px_-1px_0_#808080]">
        Filter...
      </button>
    </div>
  );
}

function Taskbar() {
  const tasks = [
    { icon: "revit", label: "Revit - [Revit1 - Ele...", active: true },
    { icon: "search", label: "intro" },
    { icon: "picture", label: "propertiesbox.jpg - A..." },
  ];
  return (
    <footer className="flex h-5 items-center border-t-2 border-[#ece9e4] pr-[2px] pl-[3px] font-['Liberation_Sans',Arial,sans-serif] text-[9px]">
      <button className={`flex h-[15px] w-[40px] items-center gap-px pl-px font-bold ${raised}`}>
        <Glyph name="windows" />
        Start
      </button>
      <Grip className="mr-[2px] ml-[5px]" />
      {["desktop", "ie", "outlook", "player"].map((name) => (
        <button key={name} aria-label={name} className="flex w-4 justify-center">
          <Glyph name={name} />
        </button>
      ))}
      <span className="w-4 text-center font-bold">»</span>
      <Grip className="mr-[2px]" />
      <div className="flex gap-[3px]">
        {tasks.map((task) => (
          <button
            key={task.label}
            className={`flex h-4 w-[112px] items-center gap-[2px] pl-[2px] whitespace-nowrap ${
              task.active ? `bg-[#ece9e4] font-bold ${sunken}` : raised
            }`}
          >
            <Glyph name={task.icon} />
            {task.label}
          </button>
        ))}
      </div>
      <div className={`ml-auto flex h-4 w-[131px] items-center gap-[2px] pl-[2px] ${sunken}`}>
        <Glyph name="plug" />
        <Glyph name="ball" />
        <span className="bg-[#000080] px-px text-[8px] leading-3 text-white">EN</span>
        <Glyph name="disk" className="ml-[2px] size-3" />
        <Glyph name="sound" className="ml-[2px] size-3" />
        <time className="mr-[11px] ml-auto">2:42 PM</time>
      </div>
    </footer>
  );
}

export default function App() {
  return (
    <div className="flex min-h-screen flex-col bg-[#d4d0c8] font-['Inter','Liberation_Sans',sans-serif] text-[7px] leading-[11px] text-black">
      <header>
        <div className="flex h-[14px] items-center justify-between bg-[linear-gradient(to_right,#18337e,#4a60a2_33%,#b6bad4_67%,#fbfaf4_87%)] pr-px pl-[2px] font-['Liberation_Sans',Arial,sans-serif] text-[9px] text-white">
          <h1 className="flex items-center gap-px">
            <Glyph name="revit" />
            Revit - [Revit1 - Elevation: North]
          </h1>
          <WindowButtons />
        </div>
        <nav className="flex h-[15px] items-center border-b border-[#96938e] pr-px pl-[3px]">
          <Glyph name="doc" />
          <div className="flex gap-2 pl-[3px]">
            {menus.map((menu) => (
              <button key={menu}>{menu}</button>
            ))}
          </div>
          <div className="ml-auto">
            <WindowButtons />
          </div>
        </nav>
        <div className="flex h-[21px] items-center border-t border-b border-t-white border-b-[#96938e]">
          <Grip className="mr-[6px] ml-1" />
          <ToolStrip tools={fileTools} />
          <Grip className="mx-[10px]" />
          <ToolStrip tools={viewTools} />
          <Grip />
          <ToolStrip tools={editTools} />
        </div>
        <div className="flex h-[21px] items-center border-t border-b border-t-white border-b-[#96938e]">
          <Grip />
          <ToolStrip tools={modelTools} />
        </div>
        <OptionsBar />
      </header>

      <div className="flex flex-1 gap-1 pt-[2px] pb-px">
        <DesignBar />
        <ProjectBrowser />
        <Canvas />
      </div>

      <div className="flex h-[13px] items-center gap-[3px] border-t border-[#96938e] pl-px">
        <span className="min-w-0 flex-1 truncate border-r border-white">
          Click to select. TAB before click for alternate candidates. CTRL-Click adds and removes. Left arrow restores last
          selection.
        </span>
        <span className={`h-[11px] w-4 ${sunken}`} />
        <span className={`h-[11px] w-[21px] text-center leading-[9px] ${sunken}`}>NUM</span>
        <span className={`h-[11px] w-[21px] ${sunken}`} />
      </div>
      <Taskbar />
    </div>
  );
}
